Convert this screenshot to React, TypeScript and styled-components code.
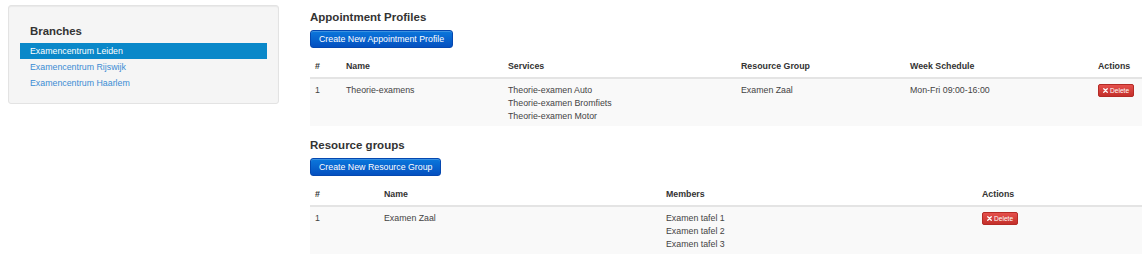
import React from "react";
import styled, { createGlobalStyle } from "styled-components";

const Global = createGlobalStyle`
  html, body { margin: 0; padding: 0; background: #fff; }
  body {
    font-family: "Liberation Sans", Arial, sans-serif;
    font-size: 8.8px;
    line-height: 13px;
    color: #333;
  }
  * { box-sizing: border-box; }
`;

const Page = styled.div`
  display: flex;
  align-items: flex-start;
  gap: 31px;
  padding: 0 0 0 8px;
  width: 1142px;
`;

const Sidebar = styled.div`
  flex: 0 0 271px;
  margin-top: 5px;
  background: #f5f5f5;
  border: 1px solid #e3e3e3;
  border-radius: 3px;
  box-shadow: inset 0 1px 1px rgba(0, 0, 0, 0.05);
  padding: 12px 11px 12px;
`;

const SideTitle = styled.div`
  font-size: 11.4px;
  font-weight: bold;
  line-height: 14px;
  color: #333;
  padding: 6px 10px 0;
  margin-bottom: 5px;
`;

const NavItem = styled.a<{ $active?: boolean }>`
  display: block;
  height: 16px;
  line-height: 16px;
  padding: 0 10px;
  color: ${(p) => (p.$active ? "#fff" : "#3a8cd4")};
  background: ${(p) => (p.$active ? "#0a88c9" : "transparent")};
  text-decoration: none;
  cursor: pointer;
`;

const Main = styled.div`
  flex: 1;
  min-width: 0;
`;

const Section = styled.section<{ $first?: boolean }>`
  padding-top: ${(p) => (p.$first ? "10px" : "12px")};
`;

const Heading = styled.h3`
  margin: 0;
  font-size: 11.5px;
  font-weight: bold;
  line-height: 14px;
  color: #333;
`;

const PrimaryButton = styled.button`
  display: inline-block;
  margin-top: 6px;
  height: 18px;
  padding: 0 8px;
  font-family: inherit;
  font-size: 8.8px;
  line-height: 16px;
  color: #fff;
  background-image: linear-gradient(to bottom, #0b78dc, #0450c0);
  border: 1px solid #0548b0;
  border-radius: 3px;
  box-shadow: inset 0 1px 0 rgba(255, 255, 255, 0.2);
  cursor: pointer;
`;

const Table = styled.table`
  width: 100%;
  margin-top: 8px;
  border-collapse: collapse;
  table-layout: fixed;
`;

const Th = styled.th`
  text-align: left;
  font-weight: bold;
  padding: 4px 5px 4px;
  line-height: 13px;
  border-bottom: 2px solid #e4e4e4;
  color: #333;
`;

const Td = styled.td`
  vertical-align: top;
  padding: 5px 5px 3px;
  line-height: 13px;
  background: #f9f9f9;
  color: #444;
`;

const Line = styled.div`
  white-space: nowrap;
`;

const DangerButton = styled.button`
  display: inline-flex;
  align-items: center;
  gap: 2px;
  margin-top: 0;
  height: 13px;
  padding: 0 4px;
  font-family: inherit;
  font-size: 6.6px;
  line-height: 11px;
  color: #fff;
  background-image: linear-gradient(to bottom, #e5504c, #c4302b);
  border: 1px solid #b42b26;
  border-radius: 2px;
  cursor: pointer;
`;

const XIcon = () => (
  <svg width="5" height="5" viewBox="0 0 10 10" aria-hidden>
    <path d="M1.5 1.5 L8.5 8.5 M8.5 1.5 L1.5 8.5" stroke="#fff" strokeWidth="2.6" strokeLinecap="round" />
  </svg>
);

const Delete = () => (
  <DangerButton>
    <XIcon />
    Delete
  </DangerButton>
);

export default function App() {
  return (
    <>
      <Global />
      <Page>
        <Sidebar>
          <SideTitle>Branches</SideTitle>
          <NavItem $active>Examencentrum Leiden</NavItem>
          <NavItem>Examencentrum Rijswijk</NavItem>
          <NavItem>Examencentrum Haarlem</NavItem>
        </Sidebar>
        <Main>
          <Section $first>
            <Heading>Appointment Profiles</Heading>
            <PrimaryButton>Create New Appointment Profile</PrimaryButton>
            <Table>
              <colgroup>
                <col style={{ width: 31 }} />
                <col style={{ width: 162 }} />
                <col style={{ width: 233 }} />
                <col style={{ width: 169 }} />
                <col style={{ width: 188 }} />
                <col />
              </colgroup>
              <thead>
                <tr>
                  <Th>#</Th>
                  <Th>Name</Th>
                  <Th>Services</Th>
                  <Th>Resource Group</Th>
                  <Th>Week Schedule</Th>
                  <Th>Actions</Th>
                </tr>
              </thead>
              <tbody>
                <tr>
                  <Td>1</Td>
                  <Td>Theorie-examens</Td>
                  <Td>
                    <Line>Theorie-examen Auto</Line>
                    <Line>Theorie-examen Bromfiets</Line>
                    <Line>Theorie-examen Motor</Line>
                  </Td>
                  <Td>Examen Zaal</Td>
                  <Td>Mon-Fri 09:00-16:00</Td>
                  <Td>
                    <Delete />
                  </Td>
                </tr>
              </tbody>
            </Table>
          </Section>
          <Section>
            <Heading>Resource groups</Heading>
            <PrimaryButton>Create New Resource Group</PrimaryButton>
            <Table>
              <colgroup>
                <col style={{ width: 69 }} />
                <col style={{ width: 282 }} />
                <col style={{ width: 316 }} />
                <col />
              </colgroup>
              <thead>
                <tr>
                  <Th>#</Th>
                  <Th>Name</Th>
                  <Th>Members</Th>
                  <Th>Actions</Th>
                </tr>
              </thead>
              <tbody>
                <tr>
                  <Td>1</Td>
                  <Td>Examen Zaal</Td>
                  <Td>
                    <Line>Examen tafel 1</Line>
                    <Line>Examen tafel 2</Line>
                    <Line>Examen tafel 3</Line>
                  </Td>
                  <Td>
                    <Delete />
                  </Td>
                </tr>
              </tbody>
            </Table>
          </Section>
        </Main>
      </Page>
    </>
  );
}
